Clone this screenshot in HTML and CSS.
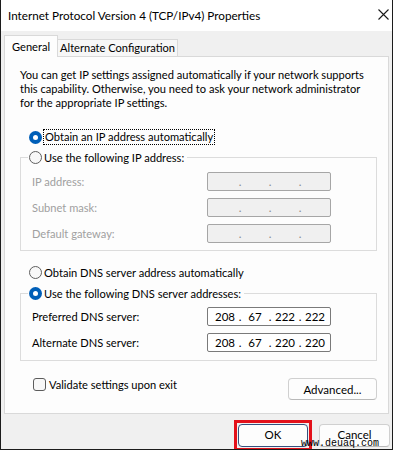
FILE: index.html
```html
<!DOCTYPE html>
<html>
  <head>
    <meta charset="utf-8" />
    <title>Internet Protocol Version 4 (TCP/IPv4) Properties</title>
    <link rel="stylesheet" href="styles.css">
  </head>
  <body>
    <div class="window">
      <div class="titlebar">
        <span class="title">Internet Protocol Version 4 (TCP/IPv4) Properties</span>
        <svg class="close" width="11" height="11" viewBox="0 0 11 11">
          <path d="M0.5 0.5L10.5 10.5M10.5 0.5L0.5 10.5" stroke="#1a1a1a" stroke-width="1.1" fill="none" />
        </svg>
      </div>
      <div class="content">
        <div class="tabs">
          <div class="tab tab-active">General</div>
          <div class="tab">Alternate Configuration</div>
        </div>
        <div class="panel">
          <p class="intro">
            You can get IP settings assigned automatically if your network supports<br />
            this capability. Otherwise, you need to ask your network administrator<br />
            for the appropriate IP settings.
          </p>

          <div class="option option-ip">
            <span class="radio radio-on"></span>
            <span class="focus">Obtain an IP address automatically</span>
          </div>

          <div class="group group-ip">
            <div class="legend">
              <span class="radio"></span>
              <span>Use the following IP address:</span>
            </div>
            <div class="field field-off">
              <span class="field-label">IP address:</span>
              <span class="ip"><i></i><b>.</b><i></i><b>.</b><i></i><b>.</b><i></i></span>
            </div>
            <div class="field field-off">
              <span class="field-label">Subnet mask:</span>
              <span class="ip"><i></i><b>.</b><i></i><b>.</b><i></i><b>.</b><i></i></span>
            </div>
            <div class="field field-off">
              <span class="field-label">Default gateway:</span>
              <span class="ip"><i></i><b>.</b><i></i><b>.</b><i></i><b>.</b><i></i></span>
            </div>
          </div>

          <div class="option option-dns">
            <span class="radio"></span>
            <span>Obtain DNS server address automatically</span>
          </div>

          <div class="group group-dns">
            <div class="legend">
              <span class="radio radio-on"></span>
              <span>Use the following DNS server addresses:</span>
            </div>
            <div class="field">
              <span class="field-label">Preferred DNS server:</span>
              <span class="ip"><i>208</i><b>.</b><i>67</i><b>.</b><i>222</i><b>.</b><i>222</i></span>
            </div>
            <div class="field">
              <span class="field-label">Alternate DNS server:</span>
              <span class="ip"><i>208</i><b>.</b><i>67</i><b>.</b><i>220</i><b>.</b><i>220</i></span>
            </div>
          </div>

          <div class="panel-bottom">
            <label class="check">
              <span class="checkbox"></span>
              <span>Validate settings upon exit</span>
            </label>
            <button class="btn btn-advanced">Advanced...</button>
          </div>
        </div>

        <div class="footer">
          <span class="highlight"><button class="btn btn-ok">OK</button></span>
          <button class="btn btn-cancel">Cancel</button>
        </div>
      </div>
      <span class="watermark">www.deuaq.com</span>
    </div>
  </body>
</html>
```

FILE: styles.css
```css
body {
  margin: 0;
  font-family: Lato, "Segoe UI", sans-serif;
  font-size: 11.1px;
  color: #000;
}
.window {
  position: relative;
  width: 393px;
  height: 450px;
  box-sizing: border-box;
  border: 1px solid #1c1c1c;
  border-top: 0;
  background: #f0f0f0;
  overflow: hidden;
}
.titlebar {
  height: 31px;
  box-sizing: border-box;
  background: #fff;
  display: flex;
  align-items: center;
  justify-content: space-between;
  padding: 0 3px 2px 7px;
}
.title {
  font-size: 11.7px;
}
.content {
  padding: 4px 3px 0 3px;
}

/* tabs */
.tabs {
  display: flex;
  align-items: flex-end;
  height: 22px;
  margin-bottom: -1px;
  position: relative;
  z-index: 1;
}
.tab {
  width: 121px;
  height: 18px;
  box-sizing: border-box;
  border: 1px solid #d9d9d9;
  background: #f7f7f7;
  text-align: center;
  line-height: 16px;
  margin-left: -1px;
}
.tab-active {
  height: 22px;
  width: 54px;
  margin-left: 0;
  line-height: 21px;
  background: #fdfdfd;
  border-bottom: 0;
}

/* panel */
.panel {
  height: 358px;
  box-sizing: border-box;
  background: #fdfdfd;
  border: 1px solid #d9d9d9;
  padding-top: 11px;
}
.intro {
  margin: 0 0 0 15px;
  line-height: 14px;
  white-space: nowrap;
}
.option,
.legend {
  display: flex;
  align-items: center;
  gap: 2px;
  height: 16px;
}
.option {
  margin-left: 24px;
}
.option-ip {
  margin-top: 19px;
}
.option-dns {
  margin-top: 13px;
}
.focus {
  outline: 1px dotted #000;
  padding: 0 1px;
  line-height: 14px;
}
.radio {
  width: 13px;
  height: 13px;
  box-sizing: border-box;
  border: 1px solid #5f5f5f;
  border-radius: 50%;
  background: #f8f8f8;
  display: grid;
  place-items: center;
  flex-shrink: 0;
}
.radio-on {
  border: 0;
  background: #005fb8;
}
.radio-on::after {
  content: "";
  width: 5px;
  height: 5px;
  border-radius: 50%;
  background: #fff;
}

/* group boxes */
.group {
  margin: 12px 11px 0 15px;
  border: 1px solid #dcdcdc;
  padding: 0 0 7px 11px;
}
.group-dns {
  margin-top: 13px;
  padding-bottom: 8px;
}
.legend {
  width: max-content;
  margin: -9px 0 0 -4px;
  padding: 0 3px 0 1px;
  background: #fdfdfd;
}
.field {
  display: flex;
  align-items: center;
  margin-top: 7px;
}
.group-dns .legend + .field {
  margin-top: 6px;
}
.field-label {
  width: 175px;
}
.ip {
  display: flex;
  align-items: center;
  width: 124px;
  height: 19px;
  box-sizing: border-box;
  border: 1px solid #7a7a7a;
  border-radius: 2px;
  background: #fff;
  padding-left: 4px;
  font-size: 11.5px;
}
.ip i,
.ip b {
  font-style: normal;
  font-weight: normal;
  text-align: center;
}
.ip i {
  width: 26px;
}
.ip b {
  width: 4px;
}
.field-off .field-label {
  color: #a0a0a0;
}
.field-off .ip {
  background: #f0f0f0;
  border-color: #a6a6a6;
  color: #8a8a8a;
}

/* bottom of panel */
.panel-bottom {
  display: flex;
  justify-content: space-between;
  align-items: flex-start;
  margin: 17px 11px 0 28px;
}
.check {
  display: flex;
  align-items: center;
  gap: 3px;
  height: 16px;
  margin-top: -2px;
}
.checkbox {
  width: 13px;
  height: 13px;
  box-sizing: border-box;
  border: 1px solid #5c5c5c;
  border-radius: 3px;
  background: #f8f8f8;
}
.btn {
  font-family: inherit;
  font-size: 11.5px;
  color: #000;
  background: #fdfdfd;
  border: 1px solid #d0d0d0;
  border-bottom-color: #b9b9b9;
  border-radius: 4px;
  padding: 0;
}
.btn-advanced {
  width: 89px;
  height: 22px;
}

/* dialog buttons */
.footer {
  display: flex;
  justify-content: flex-end;
  align-items: flex-start;
  gap: 7px;
  padding-top: 6px;
  margin-right: -1px;
}
.highlight {
  display: flex;
  padding: 1px;
  border: 3px solid #e3101a;
}
.btn-ok,
.btn-cancel {
  height: 23px;
  padding-bottom: 3px;
}
.btn-ok {
  width: 70px;
  border-color: #34507e;
}
.btn-cancel {
  width: 71px;
  margin-top: 4px;
}
.watermark {
  position: absolute;
  left: 300px;
  top: 438px;
  font-family: "Liberation Mono", monospace;
  font-size: 10px;
  color: #000;
}
```
